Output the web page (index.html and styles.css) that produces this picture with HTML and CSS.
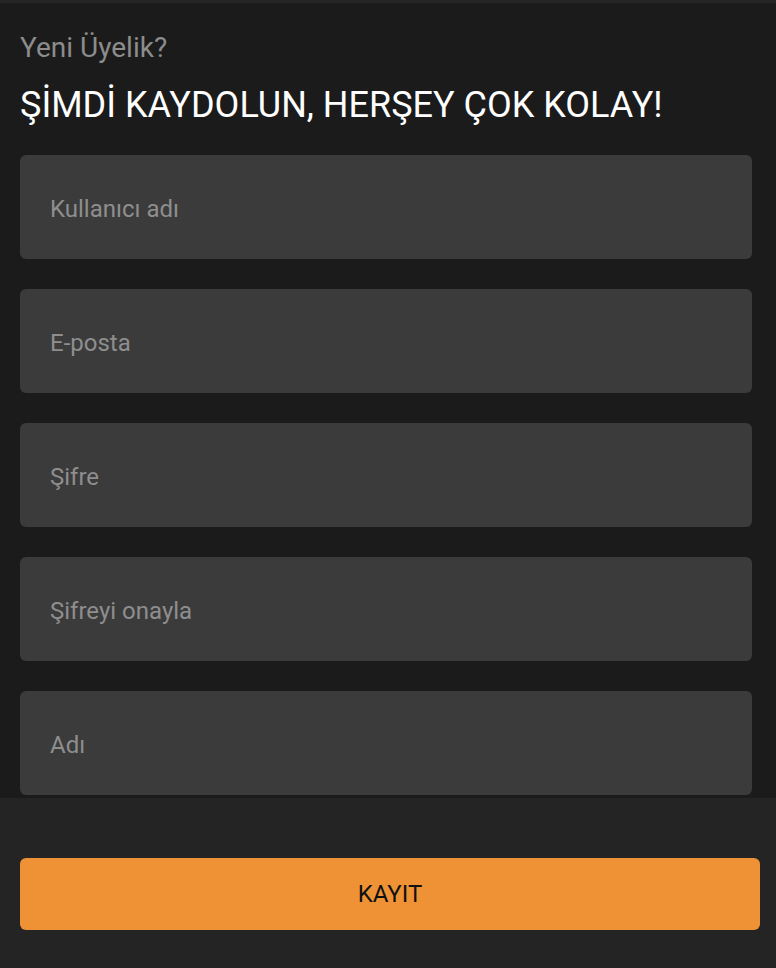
FILE: index.html
```html
<!DOCTYPE html>
<html lang="tr">
<head>
<meta charset="utf-8">
<title>Kayıt</title>
<link rel="stylesheet" href="styles.css">
</head>
<body>
<div class="page">
  <main class="content">
    <p class="intro">Yeni Üyelik?</p>
    <h1 class="title">ŞİMDİ KAYDOLUN, HERŞEY ÇOK KOLAY!</h1>
    <form class="form">
      <input class="field" type="text" placeholder="Kullanıcı adı">
      <input class="field" type="email" placeholder="E-posta">
      <input class="field" type="password" placeholder="Şifre">
      <input class="field" type="password" placeholder="Şifreyi onayla">
      <input class="field" type="text" placeholder="Adı">
    </form>
  </main>
  <footer class="footer">
    <button class="submit" type="button">KAYIT</button>
  </footer>
</div>
</body>
</html>
```
FILE: styles.css
```css
* { box-sizing: border-box; }
html, body { margin: 0; padding: 0; }
body {
  background: #1b1b1b;
  font-family: Roboto, "Liberation Sans", sans-serif;
  width: 776px;
  height: 968px;
  overflow: hidden;
}
.page {
  display: flex;
  flex-direction: column;
  height: 968px;
  border-top: 3px solid #262626;
}
.content {
  flex: 1;
  padding: 27px 24px 0 20px;
}
.intro {
  margin: 0;
  color: #8c8c8c;
  font-size: 28px;
  line-height: 36px;
}
.title {
  margin: 17px 0 0;
  color: #ffffff;
  font-size: 36px;
  font-weight: 400;
  line-height: 44px;
}
.form {
  display: flex;
  flex-direction: column;
  gap: 30px;
  margin-top: 28px;
}
.field {
  display: block;
  width: 732px;
  height: 104px;
  border: none;
  border-radius: 6px;
  background: #3b3b3b;
  padding: 4px 30px 0;
  font-family: Roboto, "Liberation Sans", sans-serif;
  font-size: 24px;
  color: #ddd;
  outline: none;
}
.field::placeholder { color: #8e8e8e; }
.footer {
  background: #242424;
  height: 170px;
  padding: 60px 16px 0 20px;
}
.submit {
  display: block;
  width: 740px;
  height: 72px;
  border: none;
  border-radius: 6px;
  background: #ef9236;
  color: #111;
  font-family: Roboto, "Liberation Sans", sans-serif;
  font-size: 24px;
  cursor: pointer;
}
```
